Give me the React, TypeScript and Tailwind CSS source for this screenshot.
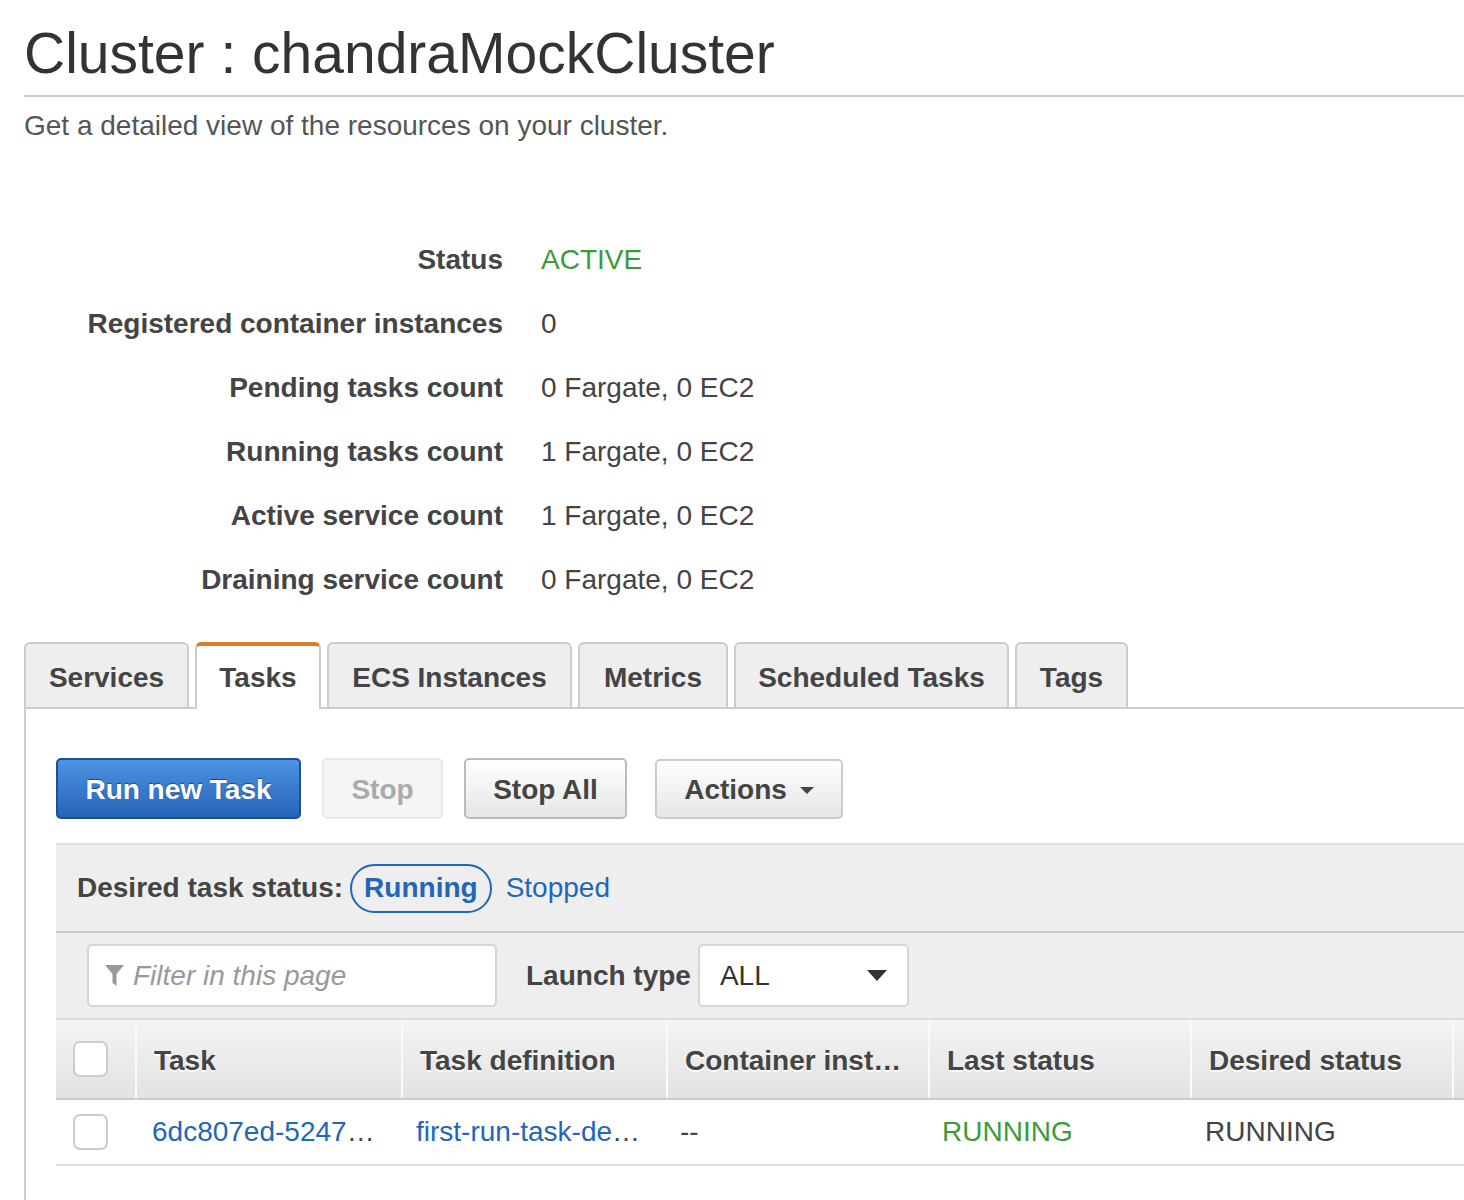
export default function App() {
  const rows: [string, string, boolean?][] = [
    ["Status", "ACTIVE", true],
    ["Registered container instances", "0"],
    ["Pending tasks count", "0 Fargate, 0 EC2"],
    ["Running tasks count", "1 Fargate, 0 EC2"],
    ["Active service count", "1 Fargate, 0 EC2"],
    ["Draining service count", "0 Fargate, 0 EC2"],
  ];
  const tabs: [string, number][] = [
    ["Services", 165],
    ["Tasks", 126],
    ["ECS Instances", 245],
    ["Metrics", 150],
    ["Scheduled Tasks", 275],
    ["Tags", 113],
  ];
  const cols: [string, number][] = [
    ["Task", 266],
    ["Task definition", 265],
    ["Container inst…", 262],
    ["Last status", 262],
    ["Desired status", 262],
    ["", 300],
  ];
  return (
    <div className="w-[1464px] h-[1200px] overflow-hidden bg-white text-[#444] flex flex-col pl-6 font-['Liberation_Sans',Arial,sans-serif]">
      <h1 className="pt-5 pb-2 text-[57px] leading-[67px] text-[#333] border-b-2 border-[#ccc] whitespace-nowrap">
        Cluster : chandraMockCluster
      </h1>
      <p className="mt-3 text-[28px] leading-[34px] text-[#555]">
        Get a detailed view of the resources on your cluster.
      </p>

      <div className="mt-[85px] flex flex-col">
        {rows.map(([k, v, green]) => (
          <div key={k} className="h-16 flex items-center text-[28px]">
            <div className="w-[479px] text-right font-bold text-[#444]">{k}</div>
            <div className={"ml-[38px] " + (green ? "text-[#3d9a3a]" : "text-[#444]")}>{v}</div>
          </div>
        ))}
      </div>

      <div className="mt-[30px] flex items-end gap-[6px] border-b-2 border-[#ccc]">
        {tabs.map(([t, w]) =>
          t === "Tasks" ? (
            <div
              key={t}
              style={{ width: w }}
              className="h-[67px] -mb-[2px] bg-white border-2 border-b-0 border-[#ccc] border-t-4 border-t-[#dd7b28] rounded-t-[6px] flex items-center justify-center text-[28px] font-bold text-[#444]"
            >
              {t}
            </div>
          ) : (
            <div
              key={t}
              style={{ width: w }}
              className="h-[65px] bg-[#eee] border-2 border-b-0 border-[#ccc] rounded-t-[6px] flex items-center justify-center text-[28px] font-bold text-[#444] pt-[4px]"
            >
              {t}
            </div>
          )
        )}
      </div>

      <div className="flex-1 border-l-2 border-[#ccc] pl-[30px] pt-[49px] flex flex-col">
        <div className="flex items-center h-[61px]">
          <button className="w-[245px] h-[61px] pt-[3px] rounded-[5px] border-2 border-[#1d4f94] bg-linear-to-b from-[#4d93e3] to-[#2763b6] text-white font-bold text-[28px] [text-shadow:0_-1px_1px_#1a4a8a]">
            Run new Task
          </button>
          <button className="ml-[21px] w-[121px] h-[61px] pt-[3px] rounded-[5px] border-2 border-[#e8e8e8] bg-[#f5f5f5] text-[#aaa] font-bold text-[28px]">
            Stop
          </button>
          <button className="ml-[21px] w-[163px] h-[61px] pt-[3px] rounded-[5px] border-2 border-[#bbb] bg-linear-to-b from-white to-[#e6e6e6] text-[#444] font-bold text-[28px]">
            Stop All
          </button>
          <button className="ml-[28px] w-[188px] h-[60px] pt-[3px] rounded-[5px] border-2 border-[#ccc] bg-linear-to-b from-white to-[#e6e6e6] text-[#444] font-bold text-[28px] flex items-center justify-center gap-[13px]">
            <span>Actions</span>
            <span className="w-0 h-0 border-x-[7px] border-x-transparent border-t-[7px] border-t-[#444]" />
          </button>
        </div>

        <div className="mt-6 bg-[#eee] border-t-2 border-[#ddd]">
          <div className="h-[86px] flex items-center pl-[21px] text-[28px]">
            <span className="font-bold text-[#444]">Desired task status:</span>
            <span className="ml-[7px] h-[49px] px-[12px] rounded-full border-2 border-[#2166b8] text-[#2166b8] font-bold flex items-center">
              Running
            </span>
            <span className="ml-[14px] text-[#2166b8]">Stopped</span>
          </div>
          <div className="h-[87px] border-t-2 border-[#ccc] flex items-center pl-[31px] text-[28px]">
            <div className="w-[410px] h-[63px] bg-white border-2 border-[#d5d5d5] rounded-[5px] flex items-center pl-[16px]">
              <svg width="19" height="21" viewBox="0 0 19 21" className="mr-[9px]">
                <path d="M0 0 H19 L11.5 9 V21 L7.5 18 V9 Z" fill="#999" />
              </svg>
              <span className="italic text-[#999]">Filter in this page</span>
            </div>
            <span className="ml-[29px] font-bold text-[#444]">Launch type</span>
            <div className="ml-[7px] w-[211px] h-[63px] bg-white border-2 border-[#d5d5d5] rounded-[5px] flex items-center justify-between pl-[20px] pr-[20px]">
              <span className="text-[#333]">ALL</span>
              <span className="w-0 h-0 border-x-[10px] border-x-transparent border-t-[11px] border-t-[#333]" />
            </div>
          </div>
        </div>

        <div className="border-t-2 border-[#ddd] flex h-[82px] border-b-2 border-b-[#ccc] bg-linear-to-b from-[#f4f4f4] to-[#e2e2e2] text-[28px] font-bold text-[#444] [text-shadow:0_2px_0_#fff] whitespace-nowrap">
          <div className="w-[79px] shrink-0 flex items-center pl-[17px]">
            <span className="w-[35px] h-[36px] rounded-[7px] border-2 border-[#ccc] bg-white" />
          </div>
          {cols.map(([c, w], i) => (
            <div
              key={i}
              style={{ width: w }}
              className="shrink-0 border-l-2 border-[#fafafa] flex items-center pl-[17px] pt-[3px]"
            >
              {c}
            </div>
          ))}
        </div>
        <div className="flex h-[66px] border-b-2 border-[#ddd] text-[28px] whitespace-nowrap">
          <div className="w-[79px] shrink-0 flex items-center pl-[17px]">
            <span className="w-[35px] h-[36px] rounded-[7px] border-2 border-[#ccc] bg-white" />
          </div>
          <div className="w-[266px] shrink-0 flex items-center pl-[17px] text-[#2166b8]">
            6dc807ed-5247<span className="text-[#444]">…</span>
          </div>
          <div className="w-[265px] shrink-0 flex items-center pl-[15px] text-[#2166b8]">
            first-run-task-de<span className="text-[#444]">…</span>
          </div>
          <div className="w-[262px] shrink-0 flex items-center pl-[14px] text-[#444]">--</div>
          <div className="w-[262px] shrink-0 flex items-center pl-[14px] text-[#3d9a3a]">RUNNING</div>
          <div className="w-[262px] shrink-0 flex items-center pl-[15px] text-[#444]">RUNNING</div>
          <div className="w-[300px] shrink-0" />
        </div>
      </div>
    </div>
  );
}
